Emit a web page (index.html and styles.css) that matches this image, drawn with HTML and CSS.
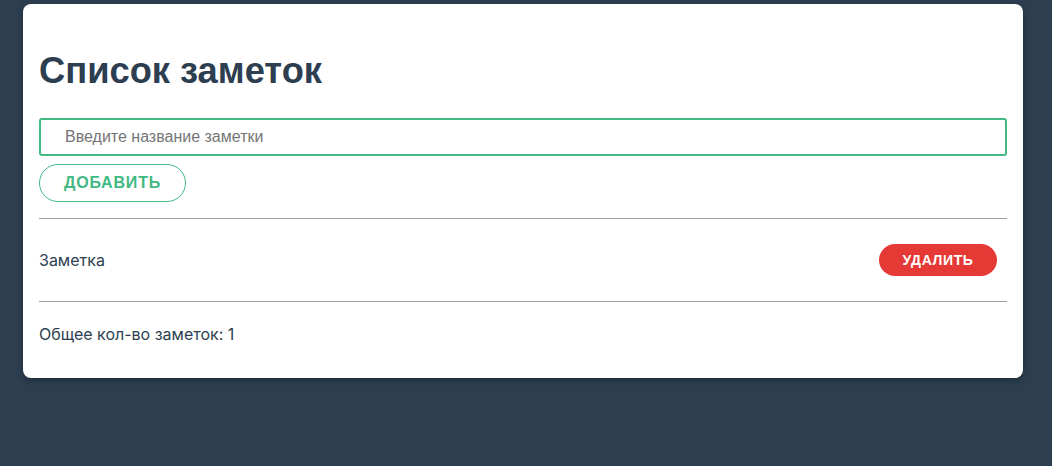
FILE: index.html
```html
<!DOCTYPE html>
<html lang="ru">
<head>
<meta charset="utf-8">
<link rel="stylesheet" href="styles.css">
</head>
<body>
<div class="card">
  <h1 class="title">Список заметок</h1>
  <input class="input" type="text" placeholder="Введите название заметки">
  <button class="btn-add">Добавить</button>
  <hr class="sep">
  <div class="note">
    <span class="note-text">Заметка</span>
    <button class="btn-del">Удалить</button>
  </div>
  <hr class="sep">
  <p class="total">Общее кол-во заметок: 1</p>
</div>
</body>
</html>
```
FILE: styles.css
```css
html, body {
  margin: 0;
  padding: 0;
  background: #2c3e50;
  height: 100%;
}
body {
  font-family: Inter, "Noto Sans", sans-serif;
  color: #2c3e50;
}
.card {
  margin: 4px 0 0 23px;
  width: 1000px;
  box-sizing: border-box;
  background: #fff;
  border-radius: 8px;
  padding: 16px 16px 1px;
  box-shadow: 0 2px 6px rgba(0,0,0,0.3);
}
.title {
  margin: 29px 0 26px;
  font-family: "Liberation Sans", Arial, sans-serif;
  font-size: 36.3px;
  font-weight: 700;
  line-height: 43px;
  color: #2c3e50;
}
.input {
  display: block;
  width: 100%;
  box-sizing: border-box;
  height: 38px;
  border: 2px solid #42b983;
  border-radius: 3px;
  padding: 0 24px;
  font-family: "Liberation Sans", Arial, sans-serif;
  font-size: 16px;
  outline: none;
}
.input::placeholder {
  color: #757575;
}
.btn-add {
  display: block;
  margin-top: 8px;
  height: 38px;
  width: 147px;
  border: 1px solid #42b983;
  border-radius: 20px;
  background: #fff;
  color: #42b983;
  font-family: "Liberation Sans", Arial, sans-serif;
  font-weight: 700;
  font-size: 16px;
  letter-spacing: 0.8px;
  text-transform: uppercase;
}
.sep {
  margin: 16px 0 0;
  border: none;
  border-top: 1px solid #9e9e9e;
  height: 0;
}
.note {
  display: flex;
  align-items: center;
  justify-content: space-between;
  height: 82px;
  padding-right: 10px;
}
.note-text {
  font-size: 16px;
}
.btn-del {
  height: 32px;
  width: 118px;
  border: none;
  border-radius: 16px;
  background: #e53935;
  color: #fff;
  font-family: "Liberation Sans", Arial, sans-serif;
  font-weight: 700;
  font-size: 14px;
  letter-spacing: 0.6px;
  text-transform: uppercase;
}
.note + .sep {
  margin-top: 0;
}
.total {
  margin: 22px 0 33px;
  font-size: 16px;
}
```
